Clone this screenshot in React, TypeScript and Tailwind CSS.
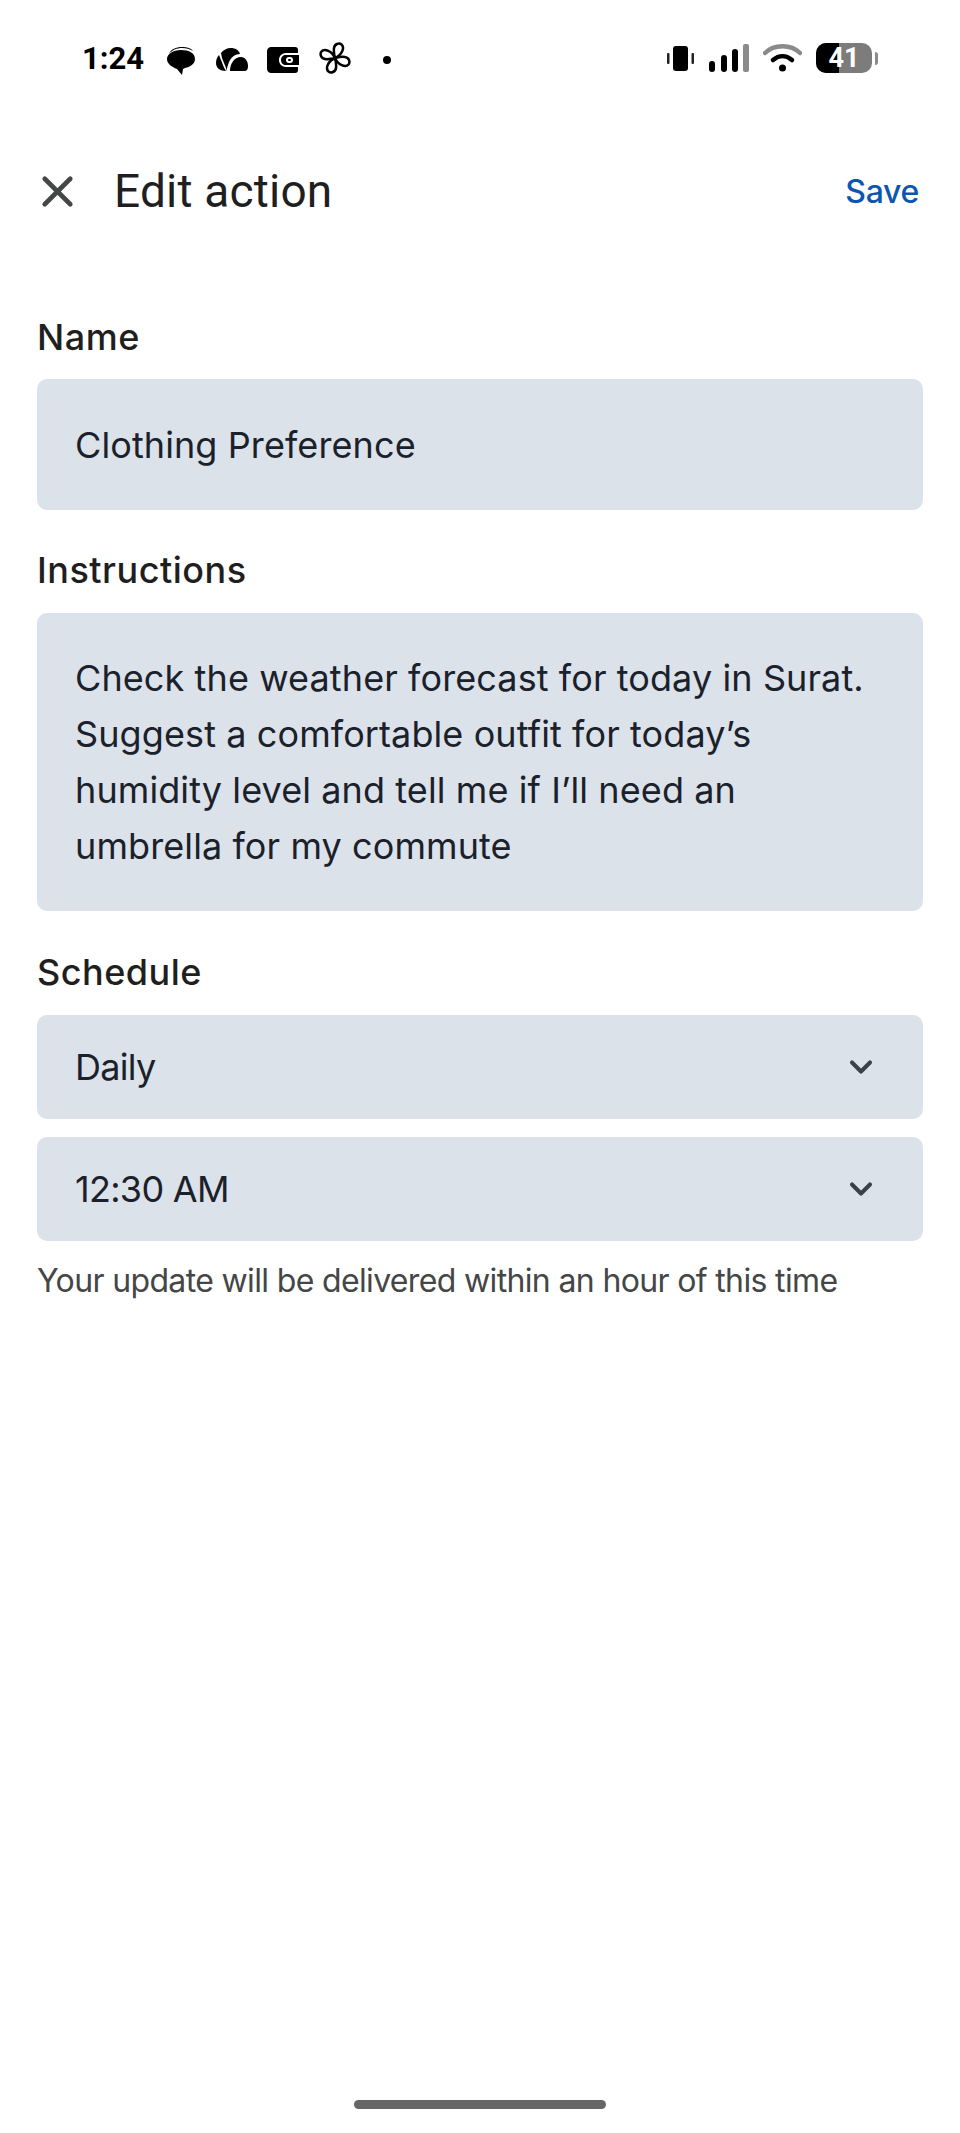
import { X, ChevronDown } from 'lucide-react';

const petal = 'M16 16C15 12 14.5 9 15 6 15.5 2 20 .5 22.5 2.5 26 5.5 23 13 16 16Z';

function StatusBar() {
  return (
    <div className="flex h-[116px] items-start justify-between pl-[82px] pr-[82px] pt-[38px] text-black" style={{ fontFamily: '"Roboto", sans-serif' }}>
      <div className="flex h-[40px] items-center">
        <span className="w-[61px] text-[31px] font-bold leading-none">1:24</span>
        {/* messages */}
        <svg className="ml-[24px] mt-[6px]" width="28" height="28" viewBox="0 0 28 28">
          <path d="M2 7C4 2 9 0 15 0c5 0 9 1 11 4-3-2-7-3-11-3C10 1 5 3 2 7z" fill="#000" />
          <path d="M14 3c8 0 14 3 14 9 0 5-5 8-10 9l-2 1-1 6-5-6C5 20 0 17 0 12 0 7 6 3 14 3z" fill="#000" />
        </svg>
        {/* cloud */}
        <svg className="ml-[21px] mt-[3px]" width="32" height="23" viewBox="0 0 32 23">
          <path d="M0 15C0 12 1 9 3 7L7 17c.5 2 2 4 3 6C4 23 0 20 0 15z" fill="#000" />
          <path d="M5 5C7 2 11 0 15 0c4 0 8 2 9 6-6 0-10 4-12 11-1 2-1 4-1 6L10 20 6 10z" fill="#000" />
          <path d="M14 23c0-7 4-14 11-14 4 0 7 4 7 9 0 3-1 5-4 5z" fill="#000" />
        </svg>
        {/* wallet */}
        <svg className="ml-[19px] mt-[3px]" width="32" height="26" viewBox="0 0 32 26">
          <path d="M4 0h24c2 0 3 1 3 3v3H19c-4 0-7 3-7 7s3 7 7 7h12v3c0 2-1 3-3 3H4c-2 0-4-2-4-4V4c0-2 2-4 4-4z" fill="#000" />
          <path d="M19 8h13v10H19c-3 0-5-2-5-5s2-5 5-5z" fill="#000" />
          <rect x="19" y="10" width="7" height="6" rx="3" fill="#fff" />
          <rect x="21" y="12" width="3" height="2" rx="1" fill="#000" />
        </svg>
        {/* pinwheel */}
        <svg className="ml-[20px]" width="32" height="32" viewBox="0 0 32 32" fill="none" stroke="#000" strokeWidth="2.5" strokeLinejoin="round">
          <path d={petal} />
          <path d={petal} transform="rotate(90 16 16)" />
          <path d={petal} transform="rotate(180 16 16)" />
          <path d={petal} transform="rotate(270 16 16)" />
        </svg>
        <span className="ml-[32px] mt-[4px] h-[8px] w-[8px] rounded-full bg-black" />
      </div>
      <div className="flex h-[40px] items-center">
        <svg width="27" height="25" viewBox="0 0 27 25">
          <rect x="6" y="0" width="15" height="25" rx="3" fill="#000" />
          <rect x="0" y="7" width="2.5" height="11" rx="1" fill="#222" />
          <rect x="24.5" y="7" width="2.5" height="11" rx="1" fill="#222" />
        </svg>
        <svg className="ml-[15px]" width="40" height="28" viewBox="0 0 40 28">
          <rect x="0" y="17" width="6" height="11" rx="3" fill="#000" />
          <rect x="12" y="11" width="6" height="17" rx="3" fill="#000" />
          <rect x="23" y="5" width="6" height="23" rx="3" fill="#000" />
          <rect x="34" y="0" width="6" height="28" rx="2" fill="#8a8a8a" />
        </svg>
        <svg className="ml-[14px]" width="39" height="28" viewBox="0 0 39 28" fill="none">
          <path d="M2 9C11 0 28 0 37 9" stroke="#8a8a8a" strokeWidth="4.5" strokeLinecap="round" />
          <path d="M10 16c6-5 13-5 19 0" stroke="#000" strokeWidth="4.5" strokeLinecap="round" />
          <circle cx="19.5" cy="24" r="3.5" fill="#000" />
        </svg>
        <div className="relative ml-[14px] flex h-[30px] w-[56px] overflow-hidden rounded-[10px] bg-[#7c7c7c]">
          <div className="h-full w-[23px] bg-black" />
          <span className="absolute inset-0 text-center text-[27px] font-bold leading-[30px] text-white">41</span>
        </div>
        <div className="ml-[3px] h-[13px] w-[3px] rounded-r-sm bg-[#8a8a8a]" />
      </div>
    </div>
  );
}

function Label({ children, className }: { children: string; className: string }) {
  return <div className={`text-[36px] font-[450] leading-[40px] tracking-[0.5px] text-[#1f1f1f] ${className}`}>{children}</div>;
}

function SelectRow({ value, className }: { value: string; className: string }) {
  return (
    <div className={`flex h-[104px] items-center justify-between rounded-[10px] bg-[#dce2ea] pl-[38px] pr-[44px] ${className}`}>
      <span className="text-[36px] tracking-[-0.7px] text-[#1b212b]">{value}</span>
      <ChevronDown size={36} strokeWidth={2.7} color="#3b414b" />
    </div>
  );
}

export default function App() {
  return (
    <div className="relative h-[2133px] w-[960px] overflow-hidden bg-white" style={{ fontFamily: '"Inter", sans-serif' }}>
      <StatusBar />
      <div className="flex h-[150px] items-center">
        <X className="ml-[32px]" size={51} strokeWidth={2.2} color="#444746" />
        <h1 className="ml-[31px] text-[46px] font-normal tracking-[0.2px] text-[#1f1f1f]" style={{ fontFamily: '"Roboto", sans-serif' }}>Edit action</h1>
        <span className="ml-auto mr-[41px] mt-[2px] text-[32px] font-medium tracking-[-0.3px] text-[#0b57b0]">Save</span>
      </div>
      <div className="px-[37px]">
        <Label className="mt-[51px]">Name</Label>
        <div className="mt-[22px] flex h-[131px] items-center rounded-[10px] bg-[#dce2ea] px-[38px] text-[36px] tracking-[0.1px] text-[#1b212b]">
          Clothing Preference
        </div>
        <Label className="mt-[40px]">Instructions</Label>
        <div className="mt-[23px] h-[298px] rounded-[10px] bg-[#dce2ea] px-[38px] pt-[37px] text-[36px] leading-[56px] tracking-[0.1px] text-[#1b212b]">
          Check the weather forecast for today in Surat.
          <br />
          Suggest a comfortable outfit for today’s
          <br />
          humidity level and tell me if I’ll need an
          <br />
          umbrella for my commute
        </div>
        <Label className="mt-[41px]">Schedule</Label>
        <SelectRow className="mt-[23px]" value="Daily" />
        <SelectRow className="mt-[18px]" value="12:30 AM" />
        <p className="mt-[20px] text-[32px] leading-[40px] tracking-[-0.65px] text-[#444746]">Your update will be delivered within an hour of this time</p>
      </div>
      <div className="absolute bottom-[24px] left-[354px] h-[9px] w-[252px] rounded-full bg-[#666666]" />
    </div>
  );
}
